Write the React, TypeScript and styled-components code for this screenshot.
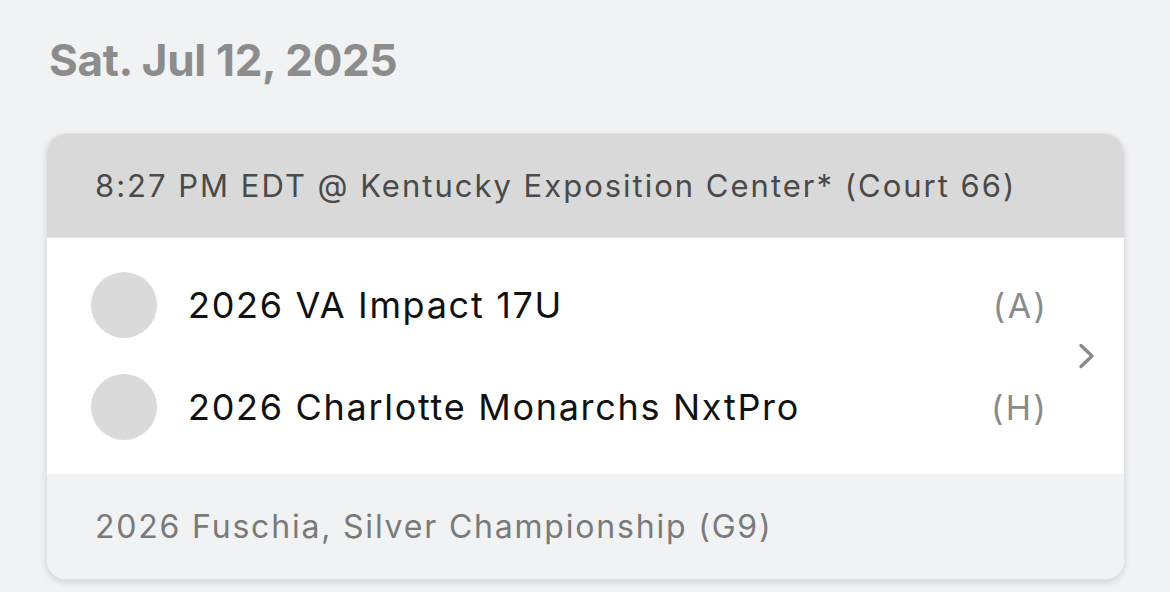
import styled, { createGlobalStyle } from 'styled-components';

const GlobalStyle = createGlobalStyle`
  html, body {
    margin: 0;
    padding: 0;
    background: #f1f2f4;
    font-family: Inter, "Noto Sans", sans-serif;
  }
`;

const Page = styled.div`
  width: 1170px;
  height: 592px;
  box-sizing: border-box;
  padding: 36px 45px 0 46px;
  overflow: hidden;
`;

const DateTitle = styled.h2`
  margin: 0 0 49px 3px;
  font-size: 44px;
  line-height: 48px;
  font-weight: 700;
  color: #8c8c8c;
  letter-spacing: -0.3px;
`;

const Card = styled.div`
  border-radius: 20px;
  overflow: hidden;
  background: #fff;
  border: 1px solid #e3e3e5;
  box-shadow: 0 3px 6px rgba(0, 0, 0, 0.12);
`;

const CardHeader = styled.div`
  height: 103px;
  display: flex;
  align-items: center;
  padding-left: 48px;
  background: #d9d9d9;
  border-bottom: 1px solid #e6e6e6;
  font-size: 31px;
  letter-spacing: 2px;
  color: #4a4a4a;
`;

const CardBody = styled.div`
  display: flex;
  align-items: center;
  padding: 34px 0;
  background: #fff;
`;

const Teams = styled.div`
  flex: 1;
  display: flex;
  flex-direction: column;
  gap: 36px;
`;

const TeamRow = styled.div`
  display: flex;
  align-items: center;
  padding-left: 44px;
`;

const Avatar = styled.div`
  width: 66px;
  height: 66px;
  border-radius: 50%;
  background: #dadada;
  flex-shrink: 0;
`;

const TeamName = styled.span`
  flex: 1;
  margin-left: 31px;
  font-size: 36px;
  letter-spacing: 1.7px;
  color: #111;
`;

const Side = styled.span`
  font-size: 34px;
  letter-spacing: 2.5px;
  margin-right: -2.5px;
  color: #8a8a8a;
`;

const ChevronCell = styled.div`
  width: 78px;
  display: flex;
  justify-content: center;
  padding-left: 4px;
  box-sizing: border-box;
`;

const CardFooter = styled.div`
  height: 105px;
  display: flex;
  align-items: center;
  padding-left: 48px;
  background: #f1f2f4;
  font-size: 32px;
  letter-spacing: 1.8px;
  color: #7a7a7a;
`;

const Chevron = () => (
  <svg width="20" height="28" viewBox="0 0 20 28" fill="none">
    <path d="M4 3.5 L15 14 L4 24.5" stroke="#8a8a8a" strokeWidth="3.4" strokeLinecap="round" strokeLinejoin="round" />
  </svg>
);

const teams = [
  { name: '2026 VA Impact 17U', side: 'A' },
  { name: '2026 Charlotte Monarchs NxtPro', side: 'H' },
];

export default function App() {
  return (
    <>
      <GlobalStyle />
      <Page>
        <DateTitle>Sat. Jul 12, 2025</DateTitle>
        <Card>
          <CardHeader>8:27 PM EDT @ Kentucky Exposition Center* (Court 66)</CardHeader>
          <CardBody>
            <Teams>
              {teams.map((t) => (
                <TeamRow key={t.side}>
                  <Avatar />
                  <TeamName>{t.name}</TeamName>
                  <Side>({t.side})</Side>
                </TeamRow>
              ))}
            </Teams>
            <ChevronCell>
              <Chevron />
            </ChevronCell>
          </CardBody>
          <CardFooter>2026 Fuschia, Silver Championship (G9)</CardFooter>
        </Card>
      </Page>
    </>
  );
}
